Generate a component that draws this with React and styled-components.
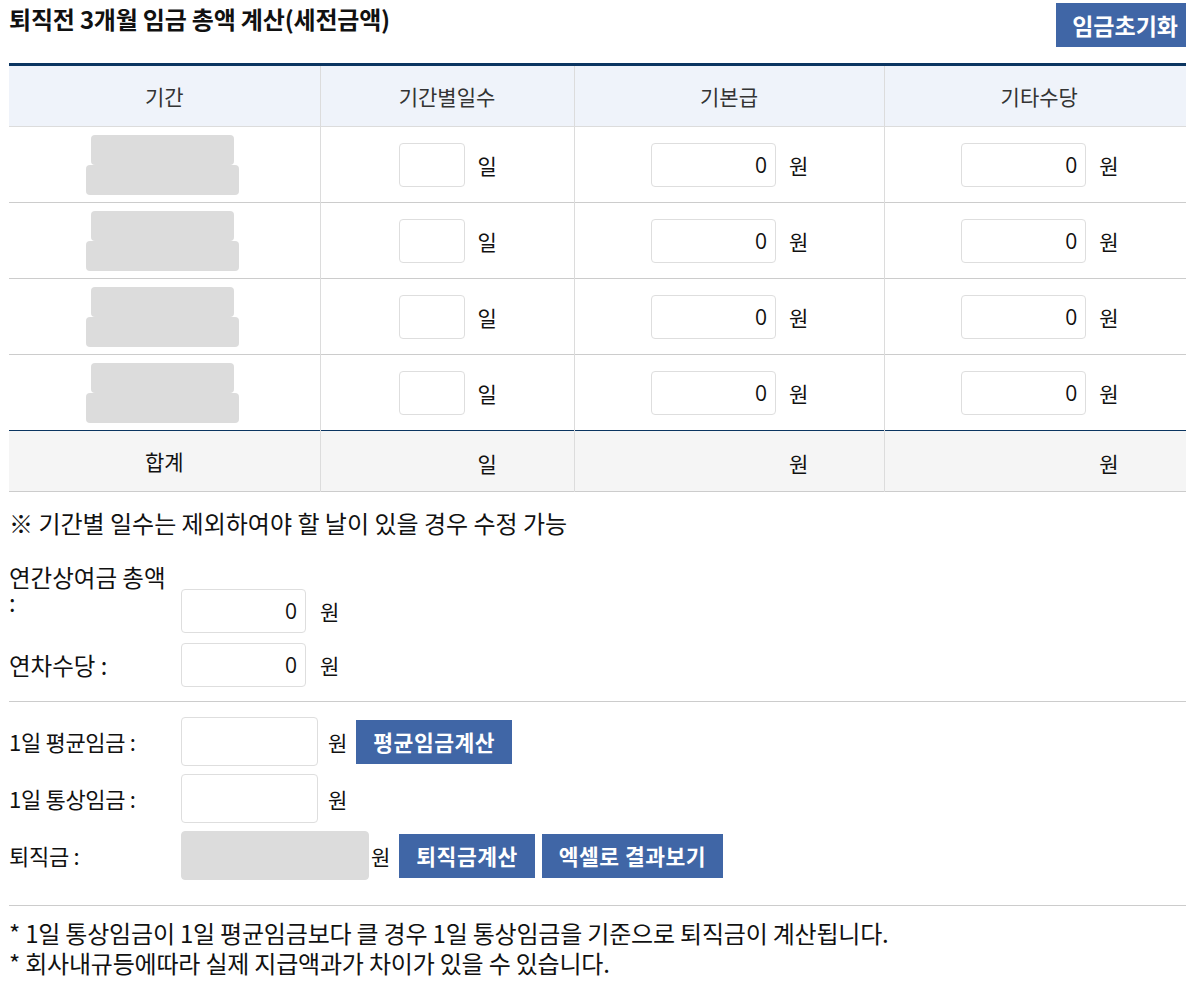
import React from "react"
import styled, { createGlobalStyle } from "styled-components"

const GlobalStyle = createGlobalStyle`
    html, body {
        overflow-x: hidden;
    }

    body {
        margin: 0;
        background: #fff;
        color: #111;
        font-family: "Noto Sans CJK KR", "Noto Sans", sans-serif;
    }
`

const rows = [1, 2, 3, 4]

const Amount = ({ width, unit, value }) => (
    <CellInner>
        <NumberBox $width={width}>{value}</NumberBox>
        <Unit>{unit}</Unit>
    </CellInner>
)

const Spacer = ({ width, unit }) => (
    <CellInner>
        <Blank $width={width} />
        <Unit>{unit}</Unit>
    </CellInner>
)

export default function App() {
    return (
        <Page>
            <GlobalStyle />
            <TitleBar>
                <Title>퇴직전 3개월 임금 총액 계산(세전금액)</Title>
                <Button $big>임금초기화</Button>
            </TitleBar>

            <Table>
                <colgroup>
                    <col style={{ width: 311 }} />
                    <col style={{ width: 254 }} />
                    <col style={{ width: 310 }} />
                    <col style={{ width: 310 }} />
                </colgroup>
                <thead>
                    <tr>
                        <Th>기간</Th>
                        <Th>기간별일수</Th>
                        <Th>기본급</Th>
                        <Th>기타수당</Th>
                    </tr>
                </thead>
                <tbody>
                    {rows.map((r) => (
                        <Tr key={r} $last={r === 4}>
                            <Td>
                                <Period>
                                    <DateBox $width={143} />
                                    <DateBox $width={153} />
                                </Period>
                            </Td>
                            <Td>
                                <Amount width={66} unit="일" value="" />
                            </Td>
                            <Td>
                                <Amount width={125} unit="원" value="0" />
                            </Td>
                            <Td>
                                <Amount width={125} unit="원" value="0" />
                            </Td>
                        </Tr>
                    ))}
                    <SumRow>
                        <SumTd>합계</SumTd>
                        <SumTd>
                            <Spacer width={66} unit="일" />
                        </SumTd>
                        <SumTd>
                            <Spacer width={125} unit="원" />
                        </SumTd>
                        <SumTd>
                            <Spacer width={125} unit="원" />
                        </SumTd>
                    </SumRow>
                </tbody>
            </Table>

            <Notice>※ 기간별 일수는 제외하여야 할 날이 있을 경우 수정 가능</Notice>

            <Form>
                <FormRow $top>
                    <Label>연간상여금 총액 :</Label>
                    <Field $offset>
                        <NumberBox $width={125}>0</NumberBox>
                        <FieldUnit>원</FieldUnit>
                    </Field>
                </FormRow>
                <FormRow>
                    <Label>연차수당 :</Label>
                    <Field>
                        <NumberBox $width={125}>0</NumberBox>
                        <FieldUnit>원</FieldUnit>
                    </Field>
                </FormRow>
            </Form>

            <Rule />

            <Form $tall>
                <FormRow>
                    <Label $narrow>1일 평균임금 :</Label>
                    <Field>
                        <BigBox $width={137} />
                        <FieldUnit $gap={10}>원</FieldUnit>
                        <Button>평균임금계산</Button>
                    </Field>
                </FormRow>
                <FormRow>
                    <Label $narrow>1일 통상임금 :</Label>
                    <Field>
                        <BigBox $width={137} />
                        <FieldUnit $gap={10}>원</FieldUnit>
                    </Field>
                </FormRow>
                <FormRow>
                    <Label $narrow>퇴직금 :</Label>
                    <Field>
                        <BigBox $width={188} $disabled />
                        <FieldUnit $gap={2}>원</FieldUnit>
                        <Button>퇴직금계산</Button>
                        <Button>엑셀로 결과보기</Button>
                    </Field>
                </FormRow>
            </Form>

            <Rule $low />

            <Notes>
                <li>* 1일 통상임금이 1일 평균임금보다 클 경우 1일 통상임금을 기준으로 퇴직금이 계산됩니다.</li>
                <li>* 회사내규등에따라 실제 지급액과가 차이가 있을 수 있습니다.</li>
            </Notes>
        </Page>
    )
}

const Page = styled.div`
    width: 1185px;
    padding-left: 9px;
`

const TitleBar = styled.div`
    display: flex;
    justify-content: space-between;
    align-items: flex-start;
    padding-top: 3px;
    height: 60px;
`

const Title = styled.h2`
    margin: 0;
    padding-top: 1px;
    font-size: 24px;
    font-weight: 700;
    line-height: 30px;
    letter-spacing: -0.2px;
    color: #111;
`

const Button = styled.button`
    border: 0;
    border-radius: 0;
    margin: 0;
    background: #4066a6;
    color: #fff;
    font-family: inherit;
    font-weight: 700;
    font-size: ${(p) => (p.$big ? "23px" : "21.5px")};
    height: 44px;
    padding: 0 ${(p) => (p.$big ? "16px" : "17px")};
    letter-spacing: ${(p) => (p.$big ? "0" : "0.5px")};
    white-space: nowrap;
    cursor: pointer;
    & + & {
        margin-left: 7px;
    }
`

const Table = styled.table`
    width: 1185px;
    border-collapse: collapse;
    table-layout: fixed;
    border-top: 3px solid #0b3561;
`

const Th = styled.th`
    height: 60px;
    padding: 0;
    background: #eff3fa;
    color: #333;
    font-size: 21px;
    font-weight: 400;
    text-align: center;
    border-bottom: 1px solid #dcdcdc;
    & + & {
        border-left: 1px solid #dcdcdc;
    }
`

const Tr = styled.tr`
    border-bottom: 1px solid ${(p) => (p.$last ? "#0b3561" : "#cccccc")};
`

const Td = styled.td`
    height: 75px;
    padding: 0;
    text-align: center;
    vertical-align: middle;
    & + & {
        border-left: 1px solid #dcdcdc;
    }
`

const SumRow = styled.tr`
    background: #f5f5f5;
    border-bottom: 1px solid #cccccc;
`

const SumTd = styled(Td)`
    height: 60px;
    font-size: 21px;
    color: #111;
`

const Period = styled.div`
    display: flex;
    flex-direction: column;
    align-items: center;
    margin-left: -4px;
`

const DateBox = styled.div`
    width: ${(p) => p.$width}px;
    height: 30px;
    border-radius: 4px;
    background: #dcdcdc;
`

const CellInner = styled.div`
    display: inline-flex;
    align-items: center;
    vertical-align: middle;
    gap: 13px;
`

const NumberBox = styled.div`
    box-sizing: border-box;
    width: ${(p) => p.$width}px;
    height: 44px;
    border: 1px solid #dedede;
    border-radius: 4px;
    background: #fff;
    padding-right: 8px;
    display: flex;
    align-items: center;
    justify-content: flex-end;
    font-family: "Open Sans", "Noto Sans", sans-serif;
    font-size: 21px;
    color: #111;
`

const Blank = styled.div`
    width: ${(p) => p.$width}px;
    height: 20px;
`

const Unit = styled.span`
    font-size: 21px;
    color: #111;
    width: 18px;
    text-align: left;
`

const Notice = styled.p`
    margin: 15px 0 0;
    font-size: 24px;
    line-height: 32px;
    color: #111;
`

const Form = styled.div`
    display: flex;
    flex-direction: column;
    gap: ${(p) => (p.$tall ? "8px" : "10px")};
    margin-top: ${(p) => (p.$tall ? "15px" : "26px")};
`

const FormRow = styled.div`
    display: flex;
    align-items: ${(p) => (p.$top ? "flex-start" : "center")};
`

const Label = styled.div`
    width: 162px;
    margin-right: 10px;
    flex: none;
    font-size: ${(p) => (p.$narrow ? "22px" : "23.5px")};
    line-height: 25px;
    color: #111;
    letter-spacing: ${(p) => (p.$narrow ? "-0.3px" : "0")};
`

const Field = styled.div`
    display: flex;
    align-items: center;
    margin-top: ${(p) => (p.$offset ? "24px" : "0")};
`

const FieldUnit = styled.span`
    margin: 0 9px 0 ${(p) => (p.$gap ?? 14)}px;
    font-size: 21px;
    color: #111;
`

const BigBox = styled.div`
    box-sizing: border-box;
    width: ${(p) => p.$width}px;
    height: 49px;
    border: 1px solid ${(p) => (p.$disabled ? "#dcdcdc" : "#dedede")};
    border-radius: 4px;
    background: ${(p) => (p.$disabled ? "#dcdcdc" : "#fff")};
`

const Rule = styled.hr`
    margin: ${(p) => (p.$low ? "25px" : "14px")} 0 0;
    border: 0;
    border-top: 1px solid #cccccc;
`

const Notes = styled.ul`
    list-style: none;
    margin: 12px 0 0;
    padding: 0;
    font-size: 24px;
    line-height: 30px;
    color: #111;
    letter-spacing: -0.2px;
`
